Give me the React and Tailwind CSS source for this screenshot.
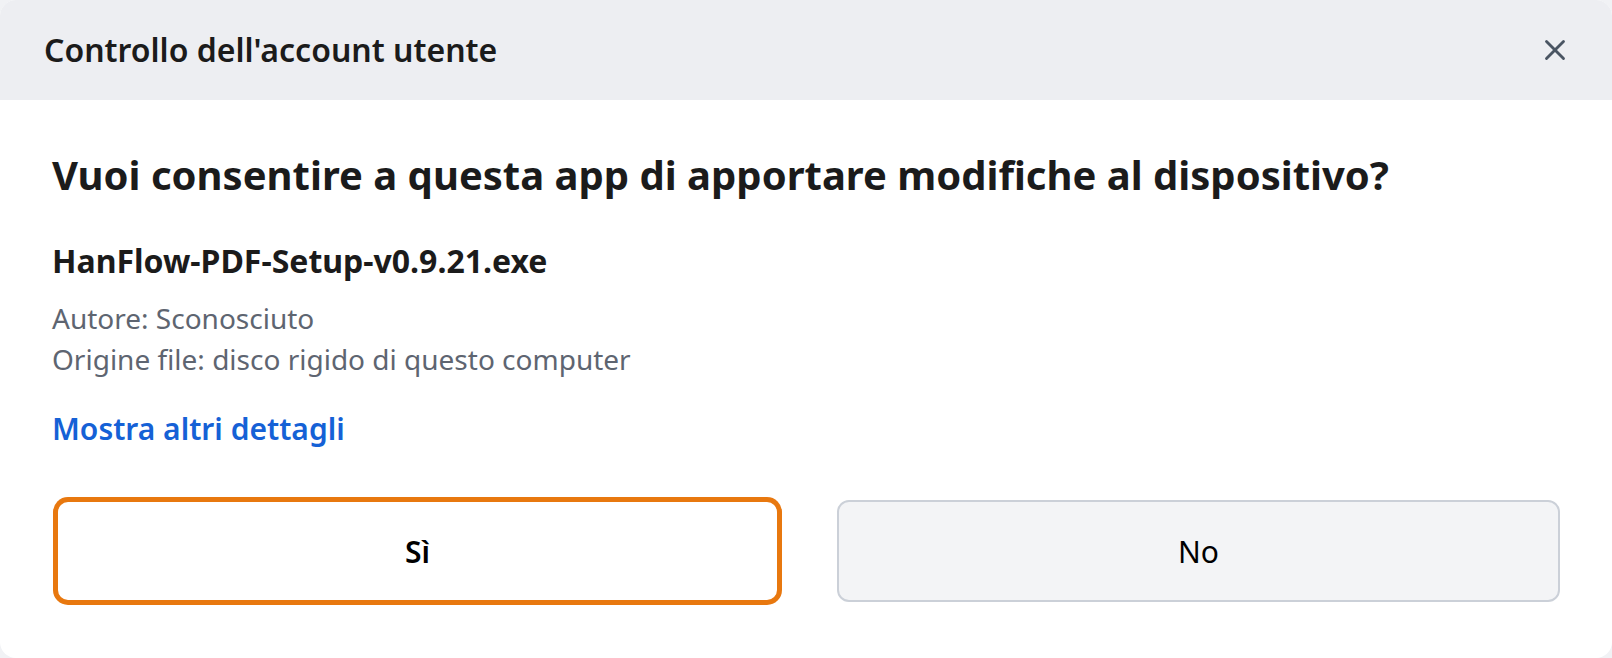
import { X } from "lucide-react";

export default function App() {
  return (
    <div className="w-[1612px] h-[658px] bg-[#f1f2f5]" style={{ fontFamily: '"Noto Sans", "Open Sans", sans-serif' }}>
      <div className="w-full h-full bg-white rounded-[16px] overflow-hidden flex flex-col">
        {/* Title bar */}
        <div className="h-[100px] shrink-0 bg-[#edeef2] flex items-center justify-between pl-[44px] pr-[40px]">
          <h1 className="text-[32px] font-semibold text-[#1b1b1b]">Controllo dell'account utente</h1>
          <button className="text-[#4a5563] flex items-center justify-center">
            <X size={34} strokeWidth={2} />
          </button>
        </div>

        {/* Body */}
        <div className="flex flex-col pl-[52px] pr-[52px] pt-[49px]">
          <h2 className="text-[40px] font-bold text-[#1b1b1b] leading-[52px]">
            Vuoi consentire a questa app di apportare modifiche al dispositivo?
          </h2>
          <p className="mt-[39px] text-[32px] font-bold text-[#1b1b1b] leading-[42px]">HanFlow-PDF-Setup-v0.9.21.exe</p>
          <div className="mt-[16px] text-[28px] text-[#5e6571] leading-[41px]">
            <p>Autore: Sconosciuto</p>
            <p>Origine file: disco rigido di questo computer</p>
          </div>
          <a className="mt-[29px] text-[30px] font-semibold text-[#1561d6] leading-[39px]">Mostra altri dettagli</a>

          <div className="mt-[52px] grid grid-cols-2 gap-[58px] pl-[4px]">
            <button className="h-[102px] rounded-[12px] bg-white border-2 border-[#e8780f] ring-[3px] ring-[#e8780f] text-[30px] font-semibold text-black">
              Sì
            </button>
            <button className="h-[102px] rounded-[12px] bg-[#f3f4f6] border-2 border-[#cbd0d8] text-[30px] text-black">
              No
            </button>
          </div>
        </div>
      </div>
    </div>
  );
}
